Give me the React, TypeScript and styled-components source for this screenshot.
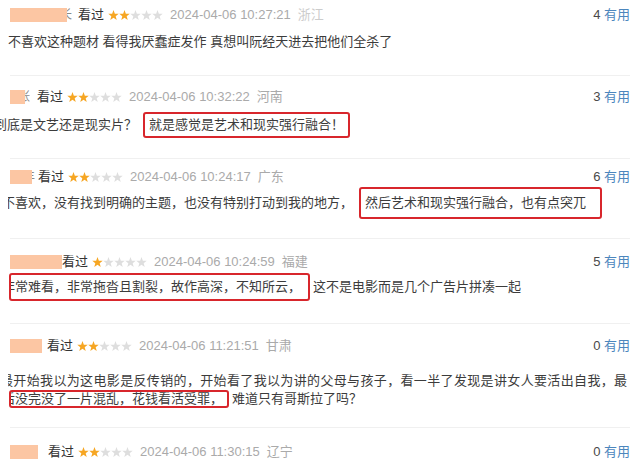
import React from "react";
import styled, { createGlobalStyle } from "styled-components";

const GlobalStyle = createGlobalStyle`
  html, body {
    margin: 0;
    padding: 0;
    background: #ffffff;
  }
  body {
    font-family: "Liberation Sans", "Noto Sans CJK SC", sans-serif;
    font-size: 13px;
    color: #333333;
  }
`;

type Part = { text: string; box?: boolean; clip?: number; pv?: number; pr?: number; tight?: boolean };

type LineData = { left: number; shift: number; parts: Part[]; tight?: boolean; ls?: number };

type CommentData = {
  nameWidth: number;
  frag?: string;
  fragWidth?: number;
  gap: number;
  stars: number;
  date: string;
  place: string;
  faded?: boolean;
  votes: number;
  pt: number;
  textGap: number;
  pb: number;
  lines: LineData[];
};

const comments: CommentData[] = [
  {
    nameWidth: 57,
    frag: "长",
    fragWidth: 5,
    gap: 6,
    stars: 2,
    date: "2024-04-06 10:27:21",
    place: "浙江",
    faded: true,
    votes: 4,
    pt: 5,
    textGap: 7,
    pb: 23,
    lines: [
      {
        left: 8,
        shift: 0,
        parts: [{ text: "不喜欢这种题材 看得我厌蠢症发作 真想叫阮经天进去把他们全杀了" }],
      },
    ],
  },
  {
    nameWidth: 15,
    frag: "张",
    fragWidth: 5,
    gap: 7,
    stars: 2,
    date: "2024-04-06 10:32:22",
    place: "河南",
    votes: 3,
    pt: 11,
    textGap: 8,
    pb: 23,
    lines: [
      {
        left: 0,
        shift: -6,
        parts: [
          { text: "到底是文艺还是现实片？" },
          { text: "就是感觉是艺术和现实强行融合！", box: true, pv: 1 },
        ],
      },
    ],
  },
  {
    nameWidth: 22,
    frag: "丰",
    fragWidth: 3,
    gap: 3,
    stars: 2,
    date: "2024-04-06 10:24:17",
    place: "广东",
    votes: 6,
    pt: 8,
    textGap: 6,
    pb: 25,
    lines: [
      {
        left: 8,
        shift: -6,
        parts: [
          { text: "不喜欢，没有找到明确的主题，也没有特别打动到我的地方，" },
          { text: "然后艺术和现实强行融合，也有点突兀", box: true, pv: 4, pr: 14 },
        ],
      },
    ],
  },
  {
    nameWidth: 52,
    gap: 0,
    stars: 1,
    date: "2024-04-06 10:24:59",
    place: "福建",
    votes: 5,
    pt: 13,
    textGap: 5,
    pb: 26,
    lines: [
      {
        left: 9,
        shift: 0,
        parts: [
          { text: "非常难看，非常拖沓且割裂，故作高深，不知所云，", box: true, pv: 2, clip: -9, pr: 7 },
          { text: "这不是电影而是几个广告片拼凑一起" },
        ],
      },
    ],
  },
  {
    nameWidth: 32,
    gap: 5,
    stars: 2,
    date: "2024-04-06 11:21:51",
    place: "甘肃",
    votes: 0,
    pt: 12,
    textGap: 16,
    pb: 19,
    lines: [
      {
        left: 8,
        shift: -8,
        tight: true,
        ls: 0.35,
        parts: [
          {
            text: "最开始我以为这电影是反传销的，开始看了我以为讲的父母与孩子，看一半了发现是讲女人要活出自我，最",
          },
        ],
      },
      {
        left: 9,
        shift: 0,
        tight: true,
        parts: [
          { text: "后没完没了一片混乱，花钱看活受罪，", box: true, tight: true, clip: -9, pr: 4 },
          { text: "难道只有哥斯拉了吗？" },
        ],
      },
    ],
  },
  {
    nameWidth: 28,
    frag: "o",
    fragWidth: 5,
    gap: 5,
    stars: 2,
    date: "2024-04-06 11:30:15",
    place: "辽宁",
    votes: 0,
    pt: 14,
    textGap: 0,
    pb: 0,
    lines: [],
  },
];

const Page = styled.div`
  width: 640px;
  height: 472px;
  overflow: hidden;
  background: #ffffff;
`;

const Comment = styled.div<{ $pt: number; $pb: number }>`
  display: flex;
  flex-direction: column;
  padding-top: ${(p) => p.$pt}px;
  padding-bottom: ${(p) => p.$pb}px;
`;

const Divider = styled.div`
  height: 1px;
  margin: 0 10px;
  background: #f0f0f0;
`;

const Header = styled.div`
  display: flex;
  align-items: center;
  justify-content: space-between;
  height: 20px;
  line-height: 20px;
  padding: 0 10px;
`;

const Meta = styled.div`
  display: flex;
  align-items: center;
`;

const NameMask = styled.span<{ $w: number }>`
  display: inline-block;
  width: ${(p) => p.$w}px;
  height: 14px;
  background: #fcc6a3;
`;

const NameFrag = styled.span<{ $w: number }>`
  display: inline-block;
  width: ${(p) => p.$w}px;
  overflow: hidden;
  white-space: nowrap;
  color: #8a8a8a;
  font-size: 12px;
  text-indent: ${(p) => p.$w - 12}px;
`;

const Watched = styled.span<{ $gap: number }>`
  margin-left: ${(p) => p.$gap}px;
  color: #333333;
`;

const Stars = styled.span`
  display: inline-flex;
  margin-left: 4px;
  svg {
    display: block;
  }
`;

const Date = styled.span`
  margin-left: 7px;
  color: #aaaaaa;
`;

const Place = styled.span<{ $faded?: boolean }>`
  margin-left: 7px;
  color: ${(p) => (p.$faded ? "#cccccc" : "#aaaaaa")};
`;

const Votes = styled.span`
  color: #494949;
  white-space: nowrap;
`;

const Useful = styled.span`
  color: #4c86bd;
`;

const Body = styled.div<{ $gap: number }>`
  margin-top: ${(p) => p.$gap}px;
`;

const Line = styled.div<{ $left: number; $shift: number; $tight?: boolean; $ls?: number }>`
  margin-left: ${(p) => p.$left}px;
  text-indent: ${(p) => p.$shift}px;
  white-space: nowrap;
  overflow-x: clip;
  overflow-y: visible;
  line-height: ${(p) => (p.$tight ? 18 : 20)}px;
  color: #3c3c3c;
  letter-spacing: ${(p) => p.$ls ?? 0}px;
`;

const Highlight = styled.span<{ $pv: number; $pr: number; $clip: number; $tight?: boolean }>`
  display: inline-block;
  vertical-align: top;
  overflow: hidden;
  text-indent: ${(p) => p.$clip}px;
  border: 2px solid #d8262c;
  border-radius: 3px;
  line-height: ${(p) => (p.$tight ? 14 : 20)}px;
  padding: ${(p) => (p.$tight ? 0 : p.$pv)}px ${(p) => p.$pr}px
    ${(p) => (p.$tight ? 0 : p.$pv)}px ${(p) => (p.$clip < 0 ? 0 : 4)}px;
  margin: ${(p) => (p.$tight ? 0 : -(p.$pv + 2))}px 3px
    ${(p) => (p.$tight ? 0 : -(p.$pv + 2))}px ${(p) => (p.$clip < 0 ? 0 : 6)}px;
`;

const Star = ({ on }: { on: boolean }) => (
  <svg width="11" height="11" viewBox="0 0 11 11">
    <polygon
      points="5.5,0 6.85,3.64 10.73,3.8 7.69,6.21 8.73,9.95 5.5,7.8 2.27,9.95 3.31,6.21 0.27,3.8 4.15,3.64"
      fill={on ? "#f6a623" : "#dedede"}
    />
  </svg>
);

const App = () => {
  return (
    <Page>
      <GlobalStyle />
      {comments.map((c, i) => (
        <React.Fragment key={`comment-${i}`}>
          <Comment $pt={c.pt} $pb={c.pb}>
            <Header>
              <Meta>
                <NameMask $w={c.nameWidth} />
                {c.frag && <NameFrag $w={c.fragWidth || 4}>{c.frag}</NameFrag>}
                <Watched $gap={c.gap}>看过</Watched>
                <Stars>
                  {[0, 1, 2, 3, 4].map((s) => (
                    <Star key={s} on={s < c.stars} />
                  ))}
                </Stars>
                <Date>{c.date}</Date>
                <Place $faded={c.faded}>{c.place}</Place>
              </Meta>
              <Votes>
                {c.votes} <Useful>有用</Useful>
              </Votes>
            </Header>
            {c.lines.length > 0 && (
              <Body $gap={c.textGap}>
                {c.lines.map((l, j) => (
                  <Line key={`line-${j}`} $left={l.left} $shift={l.shift} $tight={l.tight} $ls={l.ls}>
                    {l.parts.map((p, k) =>
                      p.box ? (
                        <Highlight
                          key={k}
                          $pv={p.pv ?? 1}
                          $pr={p.pr ?? 4}
                          $clip={p.clip ?? 0}
                          $tight={p.tight}
                        >
                          {p.text}
                        </Highlight>
                      ) : (
                        <span key={k}>{p.text}</span>
                      )
                    )}
                  </Line>
                ))}
              </Body>
            )}
          </Comment>
          {i < comments.length - 1 && <Divider />}
        </React.Fragment>
      ))}
    </Page>
  );
};

export default App;
